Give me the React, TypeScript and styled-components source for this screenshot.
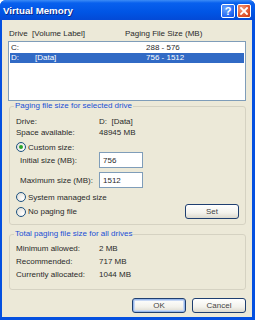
import React from 'react';
import styled, { createGlobalStyle, css } from 'styled-components';

const GlobalStyle = createGlobalStyle`
  html, body {
    margin: 0;
    padding: 0;
    background: #ffffff;
  }
  body {
    font-family: 'Liberation Sans', Arial, sans-serif;
  }
`;

const Window = styled.div`
  width: 255px;
  height: 320px;
  box-sizing: border-box;
  display: flex;
  flex-direction: column;
  background: #0450e0;
  padding: 0 3px 3px 2px;
  border-radius: 6px 6px 0 0;
  overflow: hidden;
`;

const TitleBar = styled.div`
  height: 20px;
  flex: none;
  display: flex;
  align-items: center;
  justify-content: space-between;
  margin: 0 -3px 0 -2px;
  padding: 0 4px 0 3px;
  background: linear-gradient(#3c8cf6 0%, #0860ee 15%, #0055e5 60%, #0349d6 100%);
`;

const Title = styled.span`
  color: #ffffff;
  font-weight: bold;
  font-size: 9.7px;
  text-shadow: 1px 1px 0 #0b2b8c;
`;

const TitleButtons = styled.div`
  display: flex;
  gap: 2px;
  margin-top: 1px;
`;

const TitleBtn = styled.div<{ $kind: 'help' | 'close' }>`
  width: 14px;
  height: 14px;
  box-sizing: border-box;
  border: 1px solid #ffffff;
  border-radius: 2px;
  display: flex;
  align-items: center;
  justify-content: center;
  color: #ffffff;
  font-weight: bold;
  font-size: 11px;
  ${(p) =>
    p.$kind === 'help'
      ? css`
          background: radial-gradient(circle at 30% 30%, #6aa6ff, #2266f2 70%, #1548d0);
        `
      : css`
          background: radial-gradient(circle at 30% 30%, #f49c7c, #e0522a 65%, #c23a12);
        `}
`;

const Body = styled.div`
  flex: 1;
  background: #ece9d8;
  display: flex;
  flex-direction: column;
  padding: 9px 6px 0 6px;
  color: #2a2a2a;
  font-size: 8px;
`;

const ListHeader = styled.div`
  display: flex;
  height: 10px;
  line-height: 10px;
  padding-left: 1px;
`;

const HeaderCell = styled.span<{ $w?: number }>`
  width: ${(p) => (p.$w ? `${p.$w}px` : 'auto')};
  white-space: pre;
`;

const ListBox = styled.div`
  margin-top: 2px;
  height: 60px;
  box-sizing: border-box;
  background: #ffffff;
  border: 1px solid #7f9db9;
  padding: 1px 1px 0 1px;
`;

const ListRow = styled.div<{ $selected?: boolean }>`
  display: flex;
  height: 10px;
  line-height: 10px;
  padding-left: 1px;
  color: ${(p) => (p.$selected ? '#ffffff' : '#2a2a2a')};
  background: ${(p) => (p.$selected ? '#316ac5' : 'transparent')};
`;

const Cell = styled.span<{ $w?: number }>`
  width: ${(p) => (p.$w ? `${p.$w}px` : 'auto')};
  flex: none;
`;

const Group = styled.fieldset<{ $gap?: number; $pb: number }>`
  margin: ${(p) => p.$gap ?? 0}px 0 0 1px;
  padding: 0 6px ${(p) => p.$pb}px 6px;
  border: 1px solid #d5d2c2;
  border-radius: 3px;
  display: flex;
  flex-direction: column;
  min-width: 0;
`;

const Legend = styled.legend`
  color: #1a4fd6;
  padding: 0 1px;
  margin-left: -2px;
  font-size: 8px;
  line-height: 10px;
`;

const InfoRow = styled.div<{ $h: number; $mt?: number }>`
  display: flex;
  align-items: center;
  height: ${(p) => p.$h}px;
  margin-top: ${(p) => p.$mt ?? 0}px;
`;

const InfoLabel = styled.span<{ $indent?: number }>`
  width: ${(p) => 83 - (p.$indent ?? 0)}px;
  padding-left: ${(p) => p.$indent ?? 0}px;
  flex: none;
`;

const InfoValue = styled.span`
  white-space: pre;
`;

const TextInput = styled.div`
  width: 44px;
  height: 16px;
  box-sizing: border-box;
  border: 1px solid #7f9db9;
  background: #ffffff;
  padding-left: 3px;
  display: flex;
  align-items: center;
`;

const RadioCircle = styled.span<{ $checked?: boolean }>`
  width: 10px;
  height: 10px;
  box-sizing: border-box;
  border-radius: 50%;
  border: 1px solid #1d5281;
  background: radial-gradient(circle at 70% 70%, #ffffff, #dcdad2);
  margin-right: 2px;
  display: flex;
  align-items: center;
  justify-content: center;
  flex: none;
  &::after {
    content: '';
    display: ${(p) => (p.$checked ? 'block' : 'none')};
    width: 4px;
    height: 4px;
    border-radius: 50%;
    background: #2aa52a;
  }
`;

const Spacer = styled.div`
  flex: 1;
`;

const Button = styled.div<{ $default?: boolean }>`
  width: 54px;
  height: 15px;
  box-sizing: border-box;
  border: 1px solid #1f3f70;
  border-radius: 3px;
  background: linear-gradient(#ffffff, #f3f2ec 60%, #dcd9ce);
  display: flex;
  align-items: center;
  justify-content: center;
  color: #444444;
  font-size: 8px;
  ${(p) =>
    p.$default &&
    css`
      box-shadow: inset 0 0 0 1px #98b8ea, inset 0 0 0 2px #c8d8f4;
    `}
`;

const ButtonBar = styled.div`
  display: flex;
  justify-content: flex-end;
  gap: 6px;
  margin-top: 8px;
`;

const CloseIcon = () => (
  <svg width="8" height="8" viewBox="0 0 8 8">
    <path d="M1 1 L7 7 M7 1 L1 7" stroke="#ffffff" strokeWidth="1.8" strokeLinecap="square" />
  </svg>
);

const App: React.FC = () => {
  return (
    <>
      <GlobalStyle />
      <Window>
        <TitleBar>
          <Title>Virtual Memory</Title>
          <TitleButtons>
            <TitleBtn $kind="help">?</TitleBtn>
            <TitleBtn $kind="close">
              <CloseIcon />
            </TitleBtn>
          </TitleButtons>
        </TitleBar>
        <Body>
          <ListHeader>
            <HeaderCell $w={116}>Drive  [Volume Label]</HeaderCell>
            <HeaderCell>Paging File Size (MB)</HeaderCell>
          </ListHeader>
          <ListBox>
            <ListRow>
              <Cell $w={24}>C:</Cell>
              <Cell $w={111}></Cell>
              <Cell>288 - 576</Cell>
            </ListRow>
            <ListRow $selected>
              <Cell $w={24}>D:</Cell>
              <Cell $w={111}>[Data]</Cell>
              <Cell>756 - 1512</Cell>
            </ListRow>
          </ListBox>

          <Group $pb={5}>
            <Legend>Paging file size for selected drive</Legend>
            <InfoRow $h={11} $mt={5}>
              <InfoLabel>Drive:</InfoLabel>
              <InfoValue>D:  [Data]</InfoValue>
            </InfoRow>
            <InfoRow $h={11}>
              <InfoLabel>Space available:</InfoLabel>
              <InfoValue>48945 MB</InfoValue>
            </InfoRow>
            <InfoRow $h={10} $mt={4}>
              <RadioCircle $checked />
              Custom size:
            </InfoRow>
            <InfoRow $h={16}>
              <InfoLabel $indent={4}>Initial size (MB):</InfoLabel>
              <TextInput>756</TextInput>
            </InfoRow>
            <InfoRow $h={16} $mt={4}>
              <InfoLabel $indent={4}>Maximum size (MB):</InfoLabel>
              <TextInput>1512</TextInput>
            </InfoRow>
            <InfoRow $h={10} $mt={4}>
              <RadioCircle />
              System managed size
            </InfoRow>
            <InfoRow $h={15} $mt={2}>
              <RadioCircle />
              No paging file
              <Spacer />
              <Button>Set</Button>
            </InfoRow>
          </Group>

          <Group $gap={4} $pb={8}>
            <Legend>Total paging file size for all drives</Legend>
            <InfoRow $h={13} $mt={3}>
              <InfoLabel>Minimum allowed:</InfoLabel>
              <InfoValue>2 MB</InfoValue>
            </InfoRow>
            <InfoRow $h={13}>
              <InfoLabel>Recommended:</InfoLabel>
              <InfoValue>717 MB</InfoValue>
            </InfoRow>
            <InfoRow $h={13}>
              <InfoLabel>Currently allocated:</InfoLabel>
              <InfoValue>1044 MB</InfoValue>
            </InfoRow>
          </Group>

          <ButtonBar>
            <Button $default>OK</Button>
            <Button>Cancel</Button>
          </ButtonBar>
        </Body>
      </Window>
    </>
  );
};

export default App;
